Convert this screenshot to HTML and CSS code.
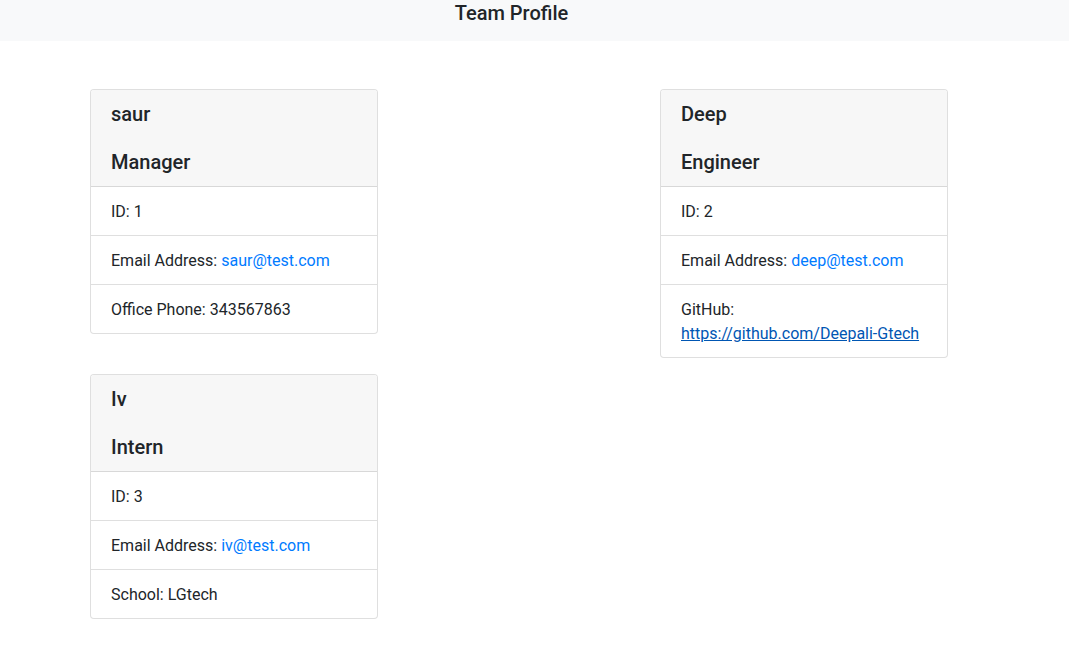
FILE: index.html
```html
<!DOCTYPE html>
<html lang="en">
<head>
<meta charset="utf-8">
<title>Team Profile</title>
<link rel="stylesheet" href="styles.css">
</head>
<body>
<nav class="navbar">
  <span class="brand">Team Profile</span>
</nav>
<main class="team">
  <div class="card">
    <div class="card-header">
      <h5 class="name">saur</h5>
      <h5 class="role">Manager</h5>
    </div>
    <ul class="list">
      <li class="item">ID: 1</li>
      <li class="item">Email Address: <a class="mail" href="mailto:saur@test.com">saur@test.com</a></li>
      <li class="item">Office Phone: 343567863</li>
    </ul>
  </div>
  <div class="card card-span">
    <div class="card-header">
      <h5 class="name">Deep</h5>
      <h5 class="role">Engineer</h5>
    </div>
    <ul class="list">
      <li class="item">ID: 2</li>
      <li class="item">Email Address: <a class="mail" href="mailto:deep@test.com">deep@test.com</a></li>
      <li class="item">GitHub: <a class="gh" href="#">https://github.com/Deepali-Gtech</a></li>
    </ul>
  </div>
  <div class="card">
    <div class="card-header">
      <h5 class="name">Iv</h5>
      <h5 class="role">Intern</h5>
    </div>
    <ul class="list">
      <li class="item">ID: 3</li>
      <li class="item">Email Address: <a class="mail" href="mailto:iv@test.com">iv@test.com</a></li>
      <li class="item">School: LGtech</li>
    </ul>
  </div>
</main>
</body>
</html>
```
FILE: styles.css
```css
* { box-sizing: border-box; }
html, body { margin: 0; padding: 0; }
body {
  font-family: Roboto, "Liberation Sans", sans-serif;
  font-size: 16px;
  line-height: 24px;
  color: #212529;
  background: #fff;
}
.navbar {
  height: 41px;
  background: #f8f9fa;
  text-align: center;
  padding-right: 46px;
  padding-top: 1px;
}
.brand {
  font-size: 20px;
  line-height: 24px;
  font-weight: 500;
}
.team {
  display: grid;
  grid-template-columns: 288px 288px;
  column-gap: 282px;
  row-gap: 40px;
  padding: 48px 0 0 90px;
  align-items: start;
}
.card-span { grid-row: span 2; }
.card {
  border: 1px solid rgba(0,0,0,.125);
  border-radius: 4px;
  overflow: hidden;
  background: #fff;
}
.card-header {
  background: #f7f7f7;
  border-bottom: 1px solid rgba(0,0,0,.125);
  padding: 12px 20px;
  display: flex;
  flex-direction: column;
  gap: 24px;
}
.name, .role {
  margin: 0;
  font-size: 20px;
  line-height: 24px;
  font-weight: 500;
}
.list { list-style: none; margin: 0; padding: 0; }
.item {
  padding: 13px 20px 11px;
  border-bottom: 1px solid rgba(0,0,0,.125);
}
.item:last-child { border-bottom: 0; }
.mail { color: #007bff; text-decoration: none; }
.gh { color: #0056b3; text-decoration: underline; }
```
